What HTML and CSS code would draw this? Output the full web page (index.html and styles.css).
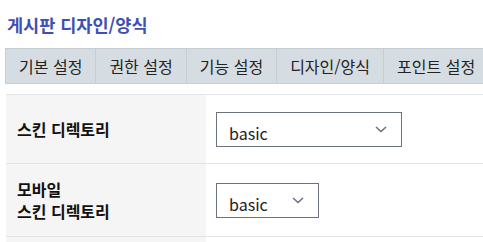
FILE: index.html
```html
<!DOCTYPE html>
<html lang="ko">
<head>
    <meta charset="UTF-8">
    <meta name="viewport" content="width=device-width, initial-scale=1.0">
    <title>게시판 디자인/양식</title>
    <link rel="stylesheet" href="styles.css">
</head>
<body>
    <h1 class="page-title">게시판 디자인/양식</h1>

    <ul class="tabs">
        <li class="tab">기본 설정</li>
        <li class="tab">권한 설정</li>
        <li class="tab">기능 설정</li>
        <li class="tab">디자인/양식</li>
        <li class="tab">포인트 설정</li>
    </ul>

    <div class="form-table">
        <div class="form-row row-skin">
            <div class="form-label">스킨 디렉토리</div>
            <div class="form-field">
                <div class="select select-wide">
                    <span class="select-value">basic</span>
                    <svg class="chevron" width="12" height="7" viewBox="0 0 12 7"><polyline points="1,1 6,5.5 11,1" fill="none" stroke="#6b7280" stroke-width="1.6"/></svg>
                </div>
            </div>
        </div>
        <div class="form-row">
            <div class="form-label">모바일<br>스킨 디렉토리</div>
            <div class="form-field">
                <div class="select select-narrow">
                    <span class="select-value">basic</span>
                    <svg class="chevron" width="12" height="7" viewBox="0 0 12 7"><polyline points="1,1 6,5.5 11,1" fill="none" stroke="#6b7280" stroke-width="1.6"/></svg>
                </div>
            </div>
        </div>
        <div class="form-row">
            <div class="form-label"></div>
            <div class="form-field"></div>
        </div>
    </div>
</body>
</html>
```

FILE: styles.css
```css
body {
    margin: 0;
    background-color: #ffffff;
    color: #222222;
    font-family: "Noto Sans CJK KR", "Noto Sans", sans-serif;
    font-size: 16px;
}

.page-title {
    margin: 0;
    padding: 12px 7px 0;
    height: 36px;
    box-sizing: border-box;
    font-size: 17.5px;
    line-height: 26px;
    font-weight: bold;
    color: #3f4fb3;
}

/* 탭 메뉴 */
.tabs {
    display: flex;
    margin: 12px 0 0 5px;
    padding: 0;
    list-style: none;
    white-space: nowrap;
}

.tab {
    flex: none;
    height: 34px;
    line-height: 34px;
    padding: 0 13px;
    background-color: #d6dde2;
    border: 1px solid #c6cdd3;
    border-left: none;
    color: #222222;
}

.tab:first-child {
    border-left: 1px solid #c6cdd3;
}

/* 설정 테이블 */
.form-table {
    margin: 10px 0 0 6px;
    border-top: 1px solid #e4e4e4;
}

.form-row {
    display: flex;
    border-bottom: 1px solid #e4e4e4;
}

.form-label {
    width: 200px;
    flex: none;
    box-sizing: border-box;
    padding: 14px 11px;
    background-color: #f5f5f5;
    font-weight: bold;
    color: #111111;
    line-height: 22px;
    display: flex;
    align-items: center;
}

.form-field {
    flex: 1;
    padding: 14px 10px;
    display: flex;
    align-items: center;
}

.row-skin .form-label,
.row-skin .form-field {
    height: 68px;
    box-sizing: border-box;
}

.select {
    display: flex;
    align-items: flex-start;
    height: 35px;
    box-sizing: border-box;
    border: 1px solid #6b7280;
    padding: 0 14px 0 12px;
}

.select-wide {
    width: 186px;
}

.select-narrow {
    width: 103px;
}

.select-value {
    flex: 1;
    display: block;
    margin-top: 10px;
    height: 17px;
    line-height: 21px;
    overflow: hidden;
    color: #222222;
}

.chevron {
    margin-top: 13px;
}
```
